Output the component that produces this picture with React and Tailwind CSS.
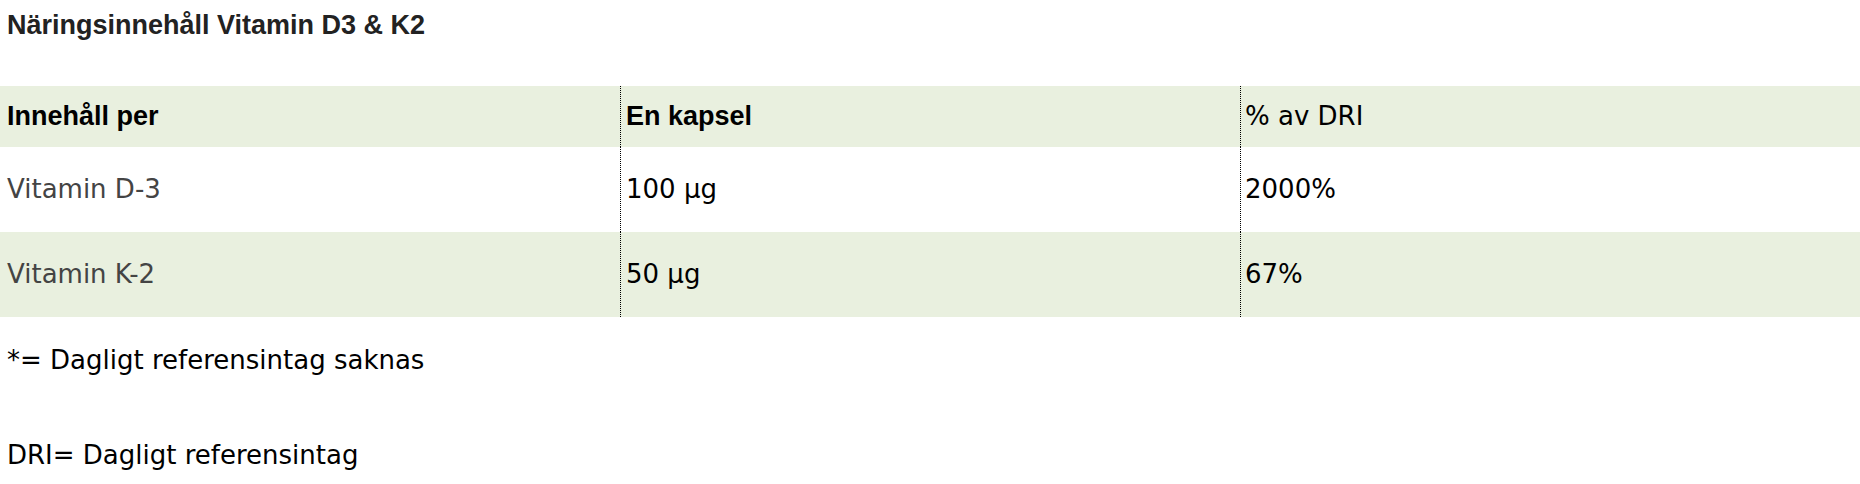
const rows = [
  { name: 'Vitamin D-3', amount: '100 µg', dri: '2000%', bg: 'bg-white' },
  { name: 'Vitamin K-2', amount: '50 µg', dri: '67%', bg: 'bg-[#e9f0df]' },
]

export default function App() {
  return (
    <div className="w-[1860px] h-[484px] bg-white text-black font-['DejaVu_Sans',sans-serif] text-[26px]">
      <div className="h-[86px] pt-[9px] pl-[7px] leading-[32px] font-bold font-['Liberation_Sans',sans-serif] text-[27px] text-[#222]">
        Näringsinnehåll Vitamin D3 &amp; K2
      </div>

      {/* Table */}
      <div className="grid grid-cols-3">
        <div className="h-[61px] bg-[#e9f0df] flex items-center pl-[7px] font-bold font-['Liberation_Sans',sans-serif] text-[27px]">Innehåll per</div>
        <div className="h-[61px] bg-[#e9f0df] flex items-center pl-[5px] font-bold font-['Liberation_Sans',sans-serif] text-[27px] border-l border-dotted border-black">En kapsel</div>
        <div className="h-[61px] bg-[#e9f0df] flex items-center pl-[4px] border-l border-dotted border-black">% av DRI</div>
        {rows.map((r) => (
          <div key={r.name} className="contents">
            <div className={`h-[85px] ${r.bg} flex items-center pl-[7px] text-[#444]`}>{r.name}</div>
            <div className={`h-[85px] ${r.bg} flex items-center pl-[5px] border-l border-dotted border-black`}>{r.amount}</div>
            <div className={`h-[85px] ${r.bg} flex items-center pl-[4px] border-l border-dotted border-black`}>{r.dri}</div>
          </div>
        ))}
      </div>

      <div className="mt-[27px] pl-[7px] leading-[32px]">*= Dagligt referensintag saknas</div>
      <div className="mt-[63px] pl-[7px] leading-[32px]">DRI= Dagligt referensintag</div>
    </div>
  )
}
